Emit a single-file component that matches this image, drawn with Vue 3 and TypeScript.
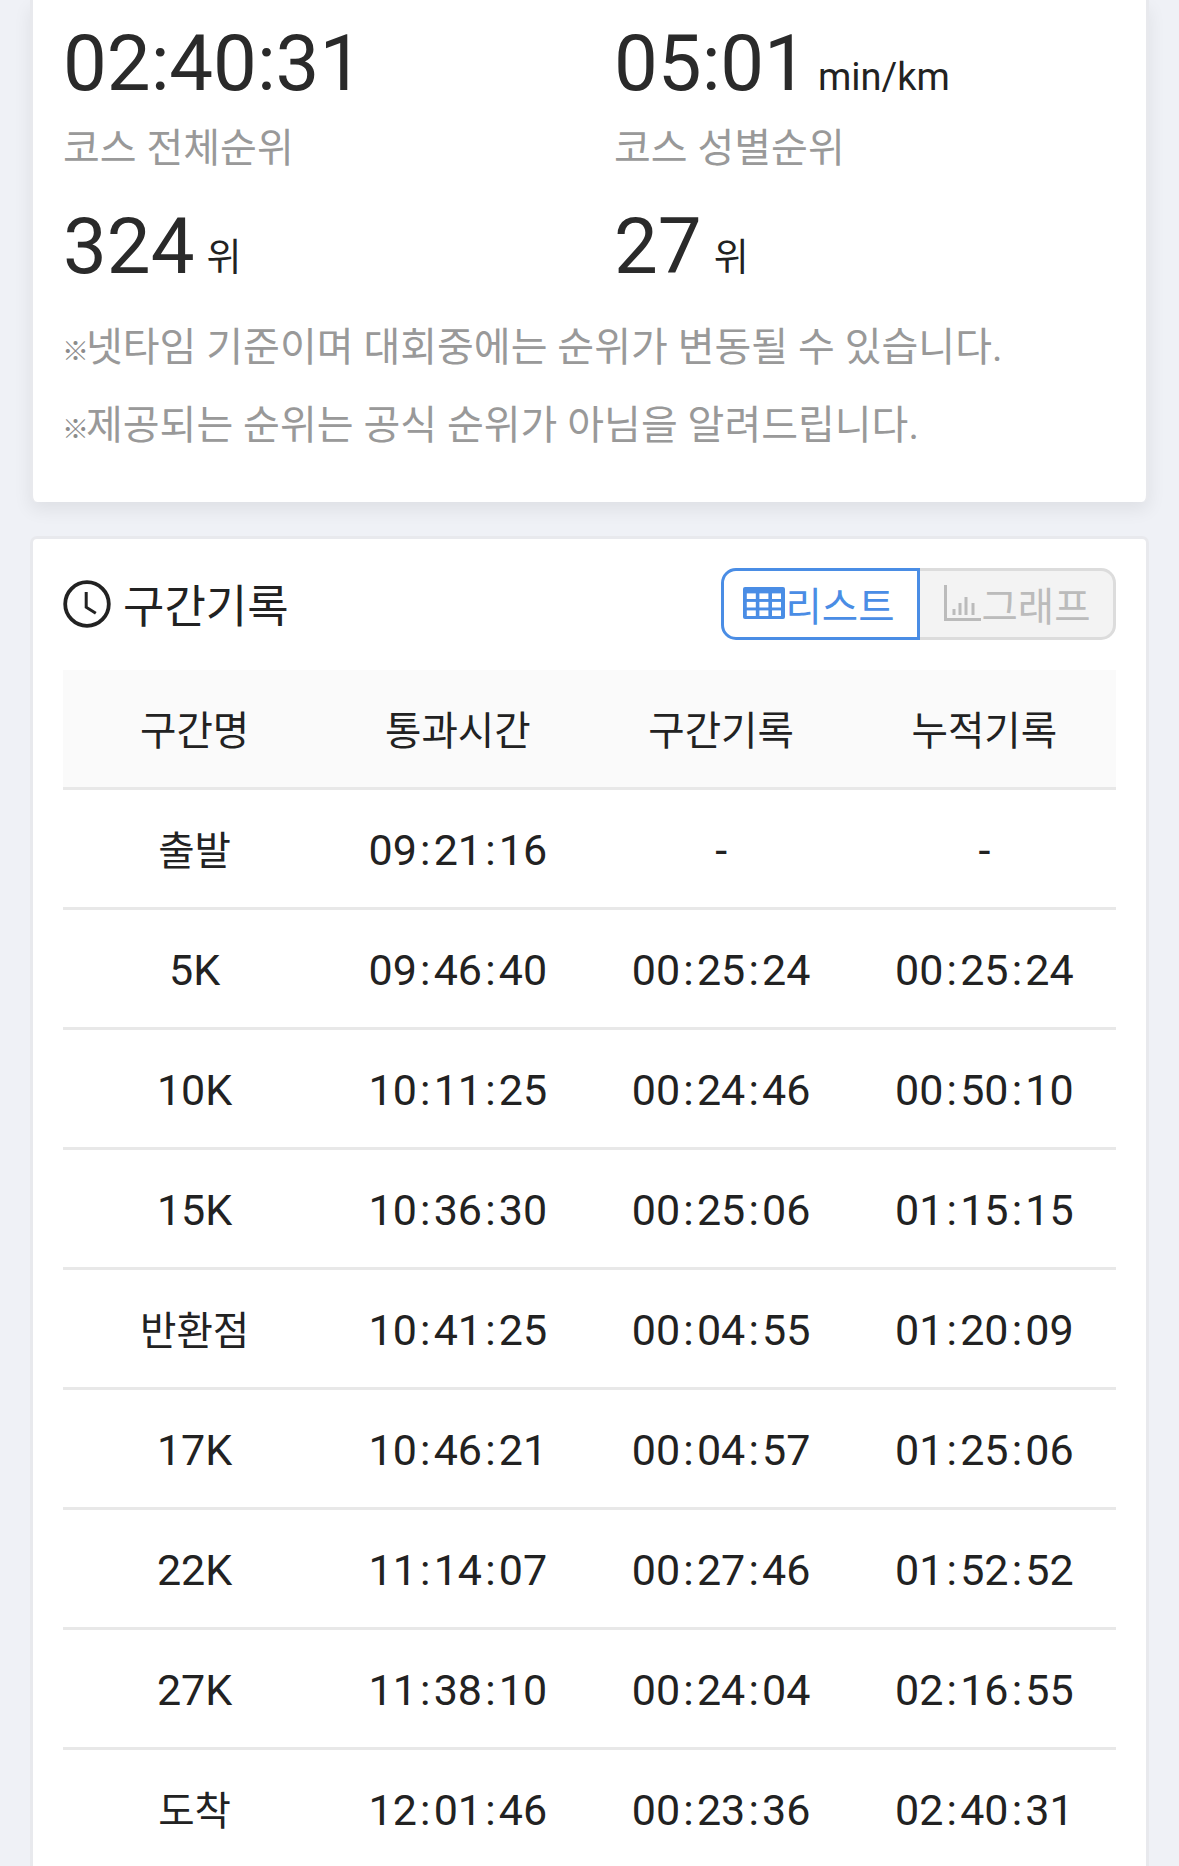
<script setup lang="ts">
interface Row { name: string; pass: string; split: string; total: string }

const rows: Row[] = [
  { name: '출발', pass: '09:21:16', split: '-', total: '-' },
  { name: '5K', pass: '09:46:40', split: '00:25:24', total: '00:25:24' },
  { name: '10K', pass: '10:11:25', split: '00:24:46', total: '00:50:10' },
  { name: '15K', pass: '10:36:30', split: '00:25:06', total: '01:15:15' },
  { name: '반환점', pass: '10:41:25', split: '00:04:55', total: '01:20:09' },
  { name: '17K', pass: '10:46:21', split: '00:04:57', total: '01:25:06' },
  { name: '22K', pass: '11:14:07', split: '00:27:46', total: '01:52:52' },
  { name: '27K', pass: '11:38:10', split: '00:24:04', total: '02:16:55' },
  { name: '도착', pass: '12:01:46', split: '00:23:36', total: '02:40:31' },
]

const headers = ['구간명', '통과시간', '구간기록', '누적기록']

const cells = (r: Row): string[] => [r.name, r.pass, r.split, r.total]
const isKorean = (s: string): boolean => /[가-힣]/.test(s)
const tableCols = [0, 1, 2]
const tableRows = [0, 1, 2]
const bars = [
  { x: 10, h: 6 },
  { x: 16, h: 12 },
  { x: 22, h: 18 },
  { x: 29, h: 12 },
]
</script>

<template>
  <div class="page">
    <section class="card card-top">
      <div class="stats">
        <div class="stat">
          <div class="value"><span class="num">02<i class="colon">:</i>40<i class="colon">:</i>31</span></div>
          <div class="label">코스 전체순위</div>
          <div class="value value-rank"><span class="num">324</span><span class="unit-ko">위</span></div>
        </div>
        <div class="stat">
          <div class="value"><span class="num">05<i class="colon">:</i>01</span><span class="unit">min/km</span></div>
          <div class="label">코스 성별순위</div>
          <div class="value value-rank"><span class="num">27</span><span class="unit-ko">위</span></div>
        </div>
      </div>
      <p class="note note-first"><span class="mark">※</span>넷타임 기준이며 대회중에는 순위가 변동될 수 있습니다.</p>
      <p class="note"><span class="mark">※</span>제공되는 순위는 공식 순위가 아님을 알려드립니다.</p>
    </section>

    <section class="card card-splits">
      <header class="head">
        <h2 class="title">
          <svg class="clock" viewBox="0 0 48 48" width="48" height="48" fill="none" stroke="#222" stroke-width="3.8">
            <circle cx="24" cy="24" r="21.8" />
            <path d="M23.2 12v15.2l9.6 6" stroke-width="3" />
          </svg>
          <span class="title-text">구간기록</span>
        </h2>
        <div class="switch">
          <button class="tab tab-on" type="button">
            <svg viewBox="0 0 42 32" width="42" height="32">
              <rect width="42" height="32" rx="2" fill="#4a8de5" />
              <template v-for="c in tableCols" :key="c">
                <rect
                  v-for="r in tableRows"
                  :key="r"
                  :x="3.8 + c * 12.6"
                  :y="6.4 + r * 8.5"
                  width="9"
                  height="5.6"
                  fill="#fff"
                />
              </template>
            </svg>
            <span>리스트</span>
          </button>
          <button class="tab tab-off" type="button">
            <svg viewBox="0 0 37 36" width="37" height="36" fill="none" stroke="#bbb">
              <path d="M1.5 0v34.5H37" stroke-width="3" />
              <path
                v-for="b in bars"
                :key="b.x"
                :d="`M${b.x} 30V${30 - b.h}`"
                stroke-width="3"
              />
            </svg>
            <span>그래프</span>
          </button>
        </div>
      </header>

      <table class="table">
        <thead>
          <tr>
            <th v-for="h in headers" :key="h">{{ h }}</th>
          </tr>
        </thead>
        <tbody>
          <tr v-for="r in rows" :key="r.name">
            <td v-for="(c, i) in cells(r)" :key="i" :class="{ ko: isKorean(c) }">
              <template v-for="(part, j) in c.split(':')" :key="j"><i v-if="j > 0" class="colon-sm">:</i>{{ part }}</template>
            </td>
          </tr>
        </tbody>
      </table>
    </section>
  </div>
</template>

<style>
html, body { margin: 0; background: #eff1f6; }
</style>

<style scoped>
.page {
  height: 1866px;
  overflow: hidden;
  padding: 0 30px;
  background: #eff1f6;
  color: #222;
  font-family: Roboto, "Noto Sans CJK KR", sans-serif;
}
.card {
  box-sizing: border-box;
  background: #fff;
  border: 3px solid #e8e9ed;
  border-radius: 7px;
  padding: 0 30px;
}
.card-top {
  height: 502px;
  border-top: none;
  border-bottom: none;
  border-radius: 0 0 7px 7px;
  padding-top: 26px;
  box-shadow: 0 8px 18px rgba(0, 0, 0, 0.07);
}
.card-splits {
  margin-top: 34px;
  padding-top: 29px;
}
.stats {
  display: grid;
  grid-template-columns: 551px 1fr;
}
.value {
  height: 76px;
  line-height: 76px;
  white-space: nowrap;
}
.value-rank {
  margin-top: 33.5px;
}
.num {
  font-size: 78px;
  font-weight: 400;
  color: #2a2a2a;
  line-height: 76px;
}
.colon {
  font-style: normal;
  letter-spacing: -0.3px;
}
.unit {
  margin-left: 10px;
  font-size: 38px;
}
.unit-ko {
  margin-left: 12px;
  font-size: 38px;
  line-height: 1;
  vertical-align: 3px;
}
.label {
  margin-top: 21px;
  height: 52px;
  line-height: 52px;
  font-size: 40px;
  color: #999;
}
.note {
  margin: 0;
  font-size: 40px;
  line-height: 78px;
  color: #999;
  white-space: nowrap;
}
.note-first {
  margin-top: 24px;
}
.mark {
  margin-left: -1px;
  font-size: 27px;
  line-height: 1;
  letter-spacing: -3px;
  font-weight: 700;
  color: #8c8c8c;
}
.head {
  display: flex;
  align-items: center;
  justify-content: space-between;
  height: 72px;
}
.title {
  display: flex;
  align-items: center;
  gap: 12px;
  margin: 0;
  font-size: 45px;
  font-weight: 400;
  color: #222;
}
.title-text {
  position: relative;
  top: -1px;
}
.switch {
  display: flex;
  height: 72px;
}
.tab {
  box-sizing: border-box;
  display: flex;
  align-items: center;
  justify-content: center;
  height: 72px;
  padding: 0 0 2px;
  font: inherit;
  font-size: 39.5px;
  border-style: solid;
  border-width: 3px;
}
.tab-on {
  width: 199px;
  padding-right: 2px;
  color: #4a8de5;
  background: #fff;
  border-color: #4a8de5;
  border-radius: 15px 0 0 15px;
}
.tab-on svg {
  margin-left: -1px;
}
.tab-off {
  width: 196px;
  color: #bbb;
  background: #f3f3f3;
  border-color: #dcdcdc;
  border-left: none;
  border-radius: 0 15px 15px 0;
}
.tab-off svg {
  margin-left: 2px;
}
.table {
  width: 100%;
  margin-top: 30px;
  table-layout: fixed;
  border-collapse: collapse;
}
th, td {
  box-sizing: content-box;
  text-align: center;
  font-weight: 400;
  color: #222;
}
th {
  height: 115px;
  padding: 0 0 2px;
  font-size: 39.6px;
  background: #fafafa;
  border-bottom: 3px solid #e8e8e8;
}
td {
  height: 115px;
  padding: 2px 0 0;
  font-size: 43px;
  border-bottom: 3px solid #e8e8e8;
}
td.ko {
  height: 114px;
  padding: 0 0 3px;
  font-size: 39.6px;
}
.colon-sm {
  font-style: normal;
  margin: 0 3.2px;
}
</style>
